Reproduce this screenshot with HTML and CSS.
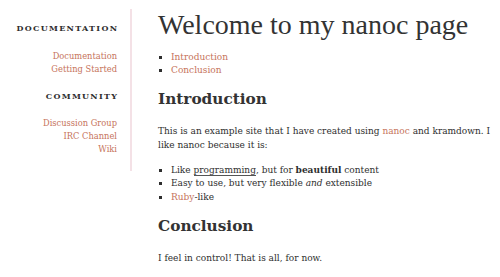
FILE: index.html
```html
<!DOCTYPE html>
<html lang="en">
<head>
    <meta charset="UTF-8">
    <title>A Brand New nanoc Site - Welcome to my nanoc page</title>
    <link rel="stylesheet" href="styles.css">
</head>
<body>
<div id="page">
    <div id="sidebar">
        <h2>Documentation</h2>
        <ul>
            <li><a href="#">Documentation</a></li>
            <li><a href="#">Getting Started</a></li>
        </ul>
        <h2>Community</h2>
        <ul>
            <li><a href="#">Discussion Group</a></li>
            <li><a href="#">IRC Channel</a></li>
            <li><a href="#">Wiki</a></li>
        </ul>
    </div>

    <div id="main">
        <h1>Welcome to my nanoc page</h1>
        <ul class="toc">
            <li><a href="#introduction">Introduction</a></li>
            <li><a href="#conclusion">Conclusion</a></li>
        </ul>

        <h2 id="introduction">Introduction</h2>
        <p>This is an example site that I have created using <a href="#">nanoc</a> and kramdown. I like nanoc because it is:</p>
        <ul>
            <li>Like <abbr title="programming">programming</abbr>, but for <strong>beautiful</strong> content</li>
            <li>Easy to use, but very flexible <em>and</em> extensible</li>
            <li><a href="#">Ruby</a>-like</li>
        </ul>

        <h2 id="conclusion">Conclusion</h2>
        <p>I feel in control! That is all, for now.</p>
    </div>
</div>
</body>
</html>
```

FILE: styles.css
```css
body {
    margin: 0;
    font-family: "DejaVu Serif", Georgia, serif;
    font-size: 9px;
    line-height: 13.5px;
    color: #2e2e2e;
    background: #fff;
}

a {
    color: #c6735b;
    text-decoration: none;
}

ul {
    list-style: square;
    margin: 0;
    padding-left: 13px;
}

#page {
    display: flex;
    align-items: flex-start;
}

#sidebar {
    flex-shrink: 0;
    width: 117px;
    margin-top: 9px;
    padding: 13px 13px 15px 0;
    border-right: 2px solid #f4e1e6;
    text-align: right;
}

#sidebar h2 {
    margin: 0 0 14px 0;
    font-size: 8px;
    line-height: 13.5px;
    letter-spacing: 1.3px;
    margin-right: -1.3px;
    text-transform: uppercase;
    color: #2e2e2e;
}

#sidebar ul {
    list-style: none;
    padding: 0;
    margin: 0 0 14px 0;
    font-size: 8.3px;
    line-height: 13px;
}

#sidebar ul:last-child {
    margin-bottom: 0;
}

#main {
    flex: 1;
    padding: 0 4px 0 26px;
}

#main h1 {
    margin: 9px 0 0 0;
    font-family: "Liberation Serif", Georgia, serif;
    font-size: 28px;
    line-height: 32px;
    font-weight: normal;
    color: #333;
}

#main .toc {
    margin-top: 9.5px;
    line-height: 13px;
}

#main h2 {
    margin: 12px 0 0 0;
    font-size: 15.3px;
    line-height: 20px;
    color: #333;
}

#main p {
    margin: 15px 0 0 0;
    line-height: 14px;
}

#main p + ul {
    margin-top: 12px;
}

abbr {
    text-decoration: none;
    border-bottom: 1px solid #555;
}
```
